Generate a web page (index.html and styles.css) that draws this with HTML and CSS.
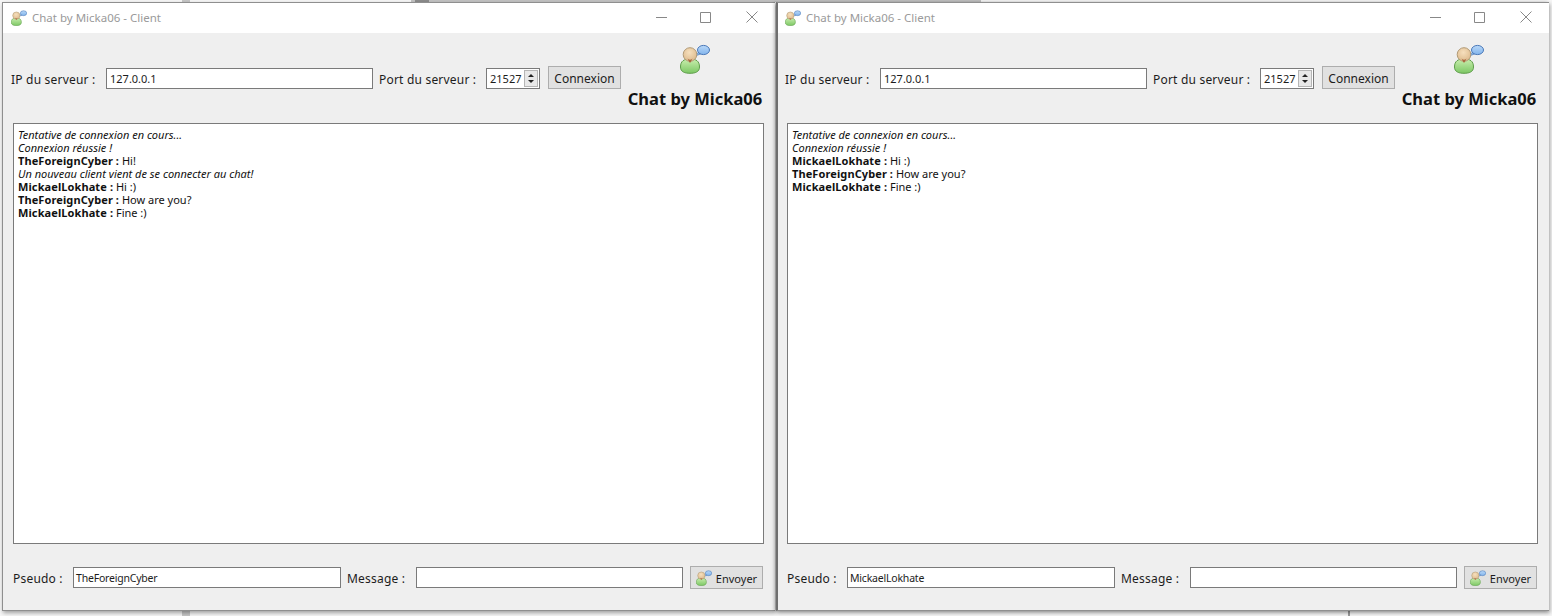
FILE: index.html
```html
<!DOCTYPE html>
<html lang="fr">
<head>
<meta charset="utf-8">
<title>Chat by Micka06</title>
<link rel="stylesheet" href="styles.css">
</head>
<body>
<svg class="defs" width="0" height="0" aria-hidden="true">
  <defs>
    <linearGradient id="g-body" x1="0" y1="0" x2="0" y2="1"><stop offset="0" stop-color="#c9eeae"/><stop offset="1" stop-color="#7cc764"/></linearGradient>
    <radialGradient id="g-head" cx=".45" cy=".35" r=".7"><stop offset="0" stop-color="#f6dfbd"/><stop offset="1" stop-color="#dcb98a"/></radialGradient>
    <linearGradient id="g-bub" x1="0" y1="0" x2="0" y2="1"><stop offset="0" stop-color="#b9d8f8"/><stop offset="1" stop-color="#82b4ec"/></linearGradient>
  </defs>
  <symbol id="logo" viewBox="0 0 30 30">
    <path d="M18 8.500 L15 12 L20.500 10 Z" fill="#8fbdf0" stroke="#4a78b8" stroke-width=".7"/>
    <ellipse cx="23.500" cy="6" rx="6" ry="4.600" fill="url(#g-bub)" stroke="#4a78b8" stroke-width="1"/>
    <path d="M.5 23 C.5 17 4 15 10 15 C16 15 19.500 17 19.500 23 C19.500 28 15 29.300 10 29.300 C5 29.300 .5 28 .5 23 Z" fill="url(#g-body)" stroke="#5f9d4b" stroke-width="1"/>
    <circle cx="10" cy="10.500" r="6.800" fill="url(#g-head)" stroke="#b29a76" stroke-width="1"/>
    <path d="M7.500 14.500 Q10 17 12.500 14.500 L10.500 18.500 L9.500 18.500 Z" fill="#a8683f"/>
  </symbol>
</svg>
<main class="desktop">
  <section class="window">
    <header class="titlebar">
      <svg class="title-icon"><use href="#logo"/></svg>
      <span class="title-text">Chat by Micka06 - Client</span>
      <div class="win-buttons">
        <svg class="win-btn" viewBox="0 0 46 30"><path d="M19 14.500H30" stroke="#888" fill="none"/></svg>
        <svg class="win-btn" viewBox="0 0 46 30"><path d="M17.500 9.500H27.500V19.500H17.500Z" stroke="#888" fill="none"/></svg>
        <svg class="win-btn" viewBox="0 0 46 30"><path d="M17.500 8.500L28.500 19.500M28.500 8.500L17.500 19.500" stroke="#888" fill="none"/></svg>
      </div>
    </header>
    <div class="top">
      <div class="connect">
        <label class="lbl lbl-ip">IP du serveur :</label>
        <div class="field field-ip">127.0.0.1</div>
        <label class="lbl lbl-port">Port du serveur :</label>
        <div class="spin"><span class="spin-val">21527</span><span class="spin-arrows"><i class="up"></i><i class="down"></i></span></div>
        <button class="btn btn-connect" type="button">Connexion</button>
      </div>
      <div class="brand">
        <svg class="brand-icon"><use href="#logo"/></svg>
        <h1 class="brand-text">Chat by Micka06</h1>
      </div>
    </div>
    <div class="log">
      <p class="sys">Tentative de connexion en cours...</p>
      <p class="sys">Connexion réussie !</p>
      <p><b>TheForeignCyber :</b> Hi!</p>
      <p class="sys">Un nouveau client vient de se connecter au chat!</p>
      <p><b>MickaelLokhate :</b> Hi :)</p>
      <p><b>TheForeignCyber :</b> How are you?</p>
      <p><b>MickaelLokhate :</b> Fine :)</p>
    </div>
    <footer class="bottom">
      <label class="lbl lbl-nick">Pseudo :</label>
      <div class="field field-nick">TheForeignCyber</div>
      <label class="lbl lbl-msg">Message :</label>
      <div class="field field-msg"></div>
      <button class="btn btn-send" type="button"><svg class="send-icon"><use href="#logo"/></svg>Envoyer</button>
    </footer>
  </section>
  <section class="window">
    <header class="titlebar">
      <svg class="title-icon"><use href="#logo"/></svg>
      <span class="title-text">Chat by Micka06 - Client</span>
      <div class="win-buttons">
        <svg class="win-btn" viewBox="0 0 46 30"><path d="M19 14.500H30" stroke="#888" fill="none"/></svg>
        <svg class="win-btn" viewBox="0 0 46 30"><path d="M17.500 9.500H27.500V19.500H17.500Z" stroke="#888" fill="none"/></svg>
        <svg class="win-btn" viewBox="0 0 46 30"><path d="M17.500 8.500L28.500 19.500M28.500 8.500L17.500 19.500" stroke="#888" fill="none"/></svg>
      </div>
    </header>
    <div class="top">
      <div class="connect">
        <label class="lbl lbl-ip">IP du serveur :</label>
        <div class="field field-ip">127.0.0.1</div>
        <label class="lbl lbl-port">Port du serveur :</label>
        <div class="spin"><span class="spin-val">21527</span><span class="spin-arrows"><i class="up"></i><i class="down"></i></span></div>
        <button class="btn btn-connect" type="button">Connexion</button>
      </div>
      <div class="brand">
        <svg class="brand-icon"><use href="#logo"/></svg>
        <h1 class="brand-text">Chat by Micka06</h1>
      </div>
    </div>
    <div class="log">
      <p class="sys">Tentative de connexion en cours...</p>
      <p class="sys">Connexion réussie !</p>
      <p><b>MickaelLokhate :</b> Hi :)</p>
      <p><b>TheForeignCyber :</b> How are you?</p>
      <p><b>MickaelLokhate :</b> Fine :)</p>
    </div>
    <footer class="bottom">
      <label class="lbl lbl-nick">Pseudo :</label>
      <div class="field field-nick">MickaelLokhate</div>
      <label class="lbl lbl-msg">Message :</label>
      <div class="field field-msg"></div>
      <button class="btn btn-send" type="button"><svg class="send-icon"><use href="#logo"/></svg>Envoyer</button>
    </footer>
  </section>
</main>
</body>
</html>
```
FILE: styles.css
```css
* { box-sizing: border-box; }
html, body { margin: 0; padding: 0; height: 100%; }
html { background: #f6f6f6; }
body {
  width: 1552px;
  height: 616px;
  overflow: hidden;
  background:
    linear-gradient(#c6c6c6, #c6c6c6) 182px 100% / 8px 6px no-repeat,
    linear-gradient(#9a9a9a, #9a9a9a) 1348px 100% / 2px 6px no-repeat,
    linear-gradient(#8c8c8c, #8c8c8c) 415px 0 / 14px 2px no-repeat,
    linear-gradient(#c2c2c2, #c2c2c2) 411px 0 / 570px 2px no-repeat,
    linear-gradient(#c6c6c6, #c6c6c6) 182px 0 / 8px 2px no-repeat,
    #f6f6f6;
  font-family: "Noto Sans", sans-serif;
  font-size: 11px;
  color: #1c1c1c;
}
.defs { position: absolute; }
.desktop {
  display: flex;
  gap: 1px;
  padding: 2px 0 0 2px;
  height: 611px;
}
.window {
  width: 773px;
  height: 609px;
  flex: none;
  display: flex;
  flex-direction: column;
  background: #efefef;
  border: 1px solid #8f8f8f;
  border-right-width: 0;
  box-shadow: 1px 2px 4px rgba(0,0,0,.35);
}
.window + .window {
  border-left: 2px solid #6f6f6f;
  width: 773px;
  box-shadow: -2px 0 3px rgba(0,0,0,.18), 1px 2px 4px rgba(0,0,0,.35);
}
.titlebar {
  height: 30px;
  flex: none;
  background: #fff;
  display: flex;
  align-items: center;
  padding-left: 8px;
}
.window + .window .titlebar { padding-left: 7px; }
.title-icon { width: 16px; height: 16px; margin-top: -1px; }
.title-text {
  margin-left: 5px;
  margin-top: -2px;
  font-size: 11.500px;
  color: #9a9a9a;
}
.win-buttons {
  margin-left: auto;
  display: flex;
}
.win-btn { width: 46px; height: 30px; display: block; }
.top {
  height: 90px;
  flex: none;
  display: flex;
  align-items: center;
  padding-left: 8px;
}
.window + .window .top { padding-left: 7px; }
.connect {
  display: flex;
  align-items: center;
}
.lbl { white-space: nowrap; font-size: 12px; letter-spacing: .2px; padding-top: 2px; }
.field {
  background: #fff;
  border: 1px solid #7a7a7a;
  height: 21px;
  line-height: 19px;
  padding-left: 3px;
  font-size: 11px;
  white-space: nowrap;
}
.lbl-ip { width: 95px; }
.field-ip { width: 267px; }
.lbl-port { margin-left: 6px; width: 107px; }
.spin {
  width: 54px;
  height: 21px;
  background: #fff;
  border: 1px solid #7a7a7a;
  display: flex;
  align-items: center;
  justify-content: space-between;
  padding: 1px 1px 1px 3px;
  font-size: 11px;
}
.spin-arrows {
  width: 14px;
  height: 100%;
  display: flex;
  flex-direction: column;
  justify-content: center;
  align-items: center;
  gap: 3px;
  background: #e8e8e8;
  border: 1px solid #b5b5b5;
}
.spin-arrows i { display: block; width: 0; height: 0; border-left: 3px solid transparent; border-right: 3px solid transparent; }
.spin-arrows .up { border-bottom: 3px solid #222; }
.spin-arrows .down { border-top: 3px solid #222; }
.btn {
  background: #e1e1e1;
  border: 1px solid #adadad;
  height: 23px;
  padding: 2px 0 0;
  font-family: inherit;
  font-size: 12px;
  color: #1c1c1c;
  display: flex;
  align-items: center;
  justify-content: center;
}
.btn-connect { width: 73px; margin-left: 8px; margin-top: -2px; }
.brand {
  margin-left: auto;
  margin-right: 7px;
  margin-bottom: 5px;
  width: 146px;
  display: flex;
  flex-direction: column;
  align-items: center;
}
.brand-icon { width: 30px; height: 30px; margin-bottom: 16px; }
.brand-text {
  margin: 0;
  font-size: 16.500px;
  line-height: 18px;
  font-weight: 700;
  color: #111;
  white-space: nowrap;
}
.log {
  height: 421px;
  flex: none;
  margin: 0 11px 0 10px;
  background: #fff;
  border: 1px solid #7a7a7a;
  padding: 4px 4px;
  font-size: 11px;
  line-height: 13px;
  color: #111;
}
.window + .window .log { margin-left: 9px; }
.log p { margin: 0; white-space: nowrap; }
.log b { letter-spacing: .1px; }
.log .sys { font-style: italic; }
.bottom {
  flex: 1;
  display: flex;
  align-items: center;
  padding-left: 10px;
}
.window + .window .bottom { padding-left: 9px; }
.bottom .lbl { padding-top: 3px; }
.lbl-nick { width: 60px; }
.field-nick {
  width: 268px;
  padding-left: 2px;
  line-height: 21px;
  font-size: 10.500px;
  letter-spacing: -.2px;
}
.lbl-msg { margin-left: 6px; width: 69px; }
.field-msg { width: 267px; }
.btn-send { width: 73px; margin-left: 7px; gap: 4px; font-size: 11px; }
.send-icon { width: 16px; height: 16px; }
```
